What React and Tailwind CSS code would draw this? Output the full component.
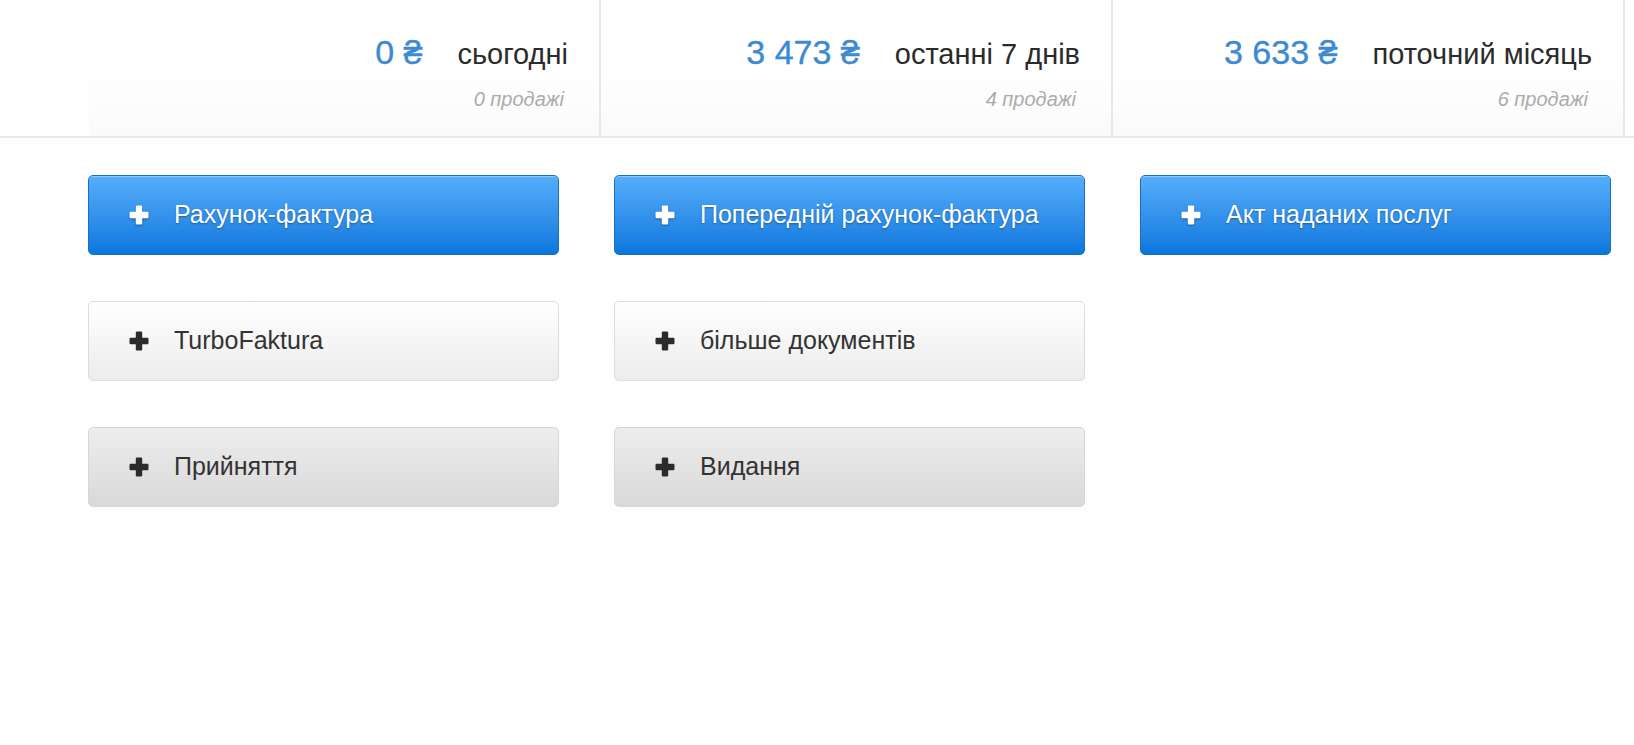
import React from "react";

const stats = [
  { amount: "0 ₴", label: "сьогодні", sales: "0 продажі" },
  { amount: "3 473 ₴", label: "останні 7 днів", sales: "4 продажі" },
  { amount: "3 633 ₴", label: "поточний місяць", sales: "6 продажі" },
];

const docs = [
  { title: "Рахунок-фактура", kind: "primary" },
  { title: "Попередній рахунок-фактура", kind: "primary" },
  { title: "Акт наданих послуг", kind: "primary" },
  { title: "TurboFaktura", kind: "light" },
  { title: "більше документів", kind: "light" },
  null,
  { title: "Прийняття", kind: "gray" },
  { title: "Видання", kind: "gray" },
  null,
];

const PlusIcon = ({ color }) => (
  <svg width="20" height="20" viewBox="0 0 20 20" className="shrink-0">
    <rect x="6.8" y="0.5" width="6.4" height="19" rx="1.2" fill={color} />
    <rect x="0.5" y="6.8" width="19" height="6.4" rx="1.2" fill={color} />
  </svg>
);

const kindClass = {
  primary:
    "border-[#1b6fc2] bg-gradient-to-b from-[#54aefa] to-[#0777dd] text-white [text-shadow:0_1px_2px_rgba(0,0,0,0.35)] shadow-[inset_0_1px_0_rgba(255,255,255,0.35)]",
  light:
    "border-[#dcdcdc] bg-gradient-to-b from-[#ffffff] to-[#ececec] text-[#333]",
  gray:
    "border-[#d6d6d6] bg-gradient-to-b from-[#ededed] to-[#d9d9d9] text-[#333]",
};

const DocButton = ({ doc }) => (
  <button
    type="button"
    className={`flex h-[80px] w-[471px] items-center rounded-[5px] border pl-[40px] text-[25px] ${kindClass[doc.kind]}`}
  >
    {doc.kind === "primary" ? (
      <span className="[filter:drop-shadow(0_1px_1px_rgba(0,0,0,0.35))]">
        <PlusIcon color="#ffffff" />
      </span>
    ) : (
      <PlusIcon color="#2b2b2b" />
    )}
    <span className="ml-[25px]">{doc.title}</span>
  </button>
);

export default function App() {
  return (
    <div
      className="min-h-[745px] w-full bg-[#fefefe]"
      style={{ fontFamily: '"Liberation Sans", Arial, Helvetica, sans-serif' }}
    >
      {/* sales summary */}
      <div className="flex h-[138px] border-b-2 border-[#e8e8ef] pl-[89px]">
        {stats.map((s) => (
          <div
            key={s.label}
            className="flex w-[512px] flex-col items-end border-r-2 border-[#e6e6ee] bg-gradient-to-b from-white via-white to-[#fafafb] pr-[31px] pt-[35px]"
          >
            <div className="flex items-baseline leading-none">
              <span className="text-[34px] text-[#3c8ad2] [-webkit-text-stroke:0.4px_#3c8ad2]">{s.amount}</span>
              <span className="ml-[35px] text-[29px] text-[#2b2b2b]">{s.label}</span>
            </div>
            <div className="mt-[20px] pr-[4px] text-[20px] italic leading-none text-[#ababab]">
              {s.sales}
            </div>
          </div>
        ))}
      </div>

      {/* new document buttons */}
      <div className="grid grid-cols-[471px_471px_471px] gap-x-[55px] gap-y-[46px] pl-[88px] pt-[37px]">
        {docs.map((d, i) => (d ? <DocButton key={i} doc={d} /> : <div key={i} />))}
      </div>
    </div>
  );
}
